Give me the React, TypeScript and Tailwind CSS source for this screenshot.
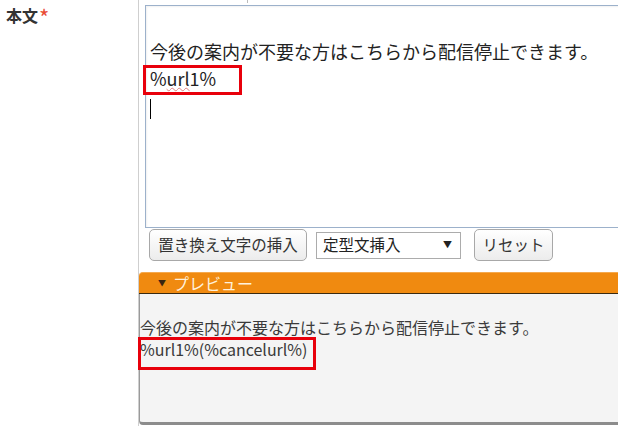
import React from 'react';

const JP = "font-['Meiryo','Noto_Sans_CJK_JP','Noto_Sans',sans-serif]";

const Btn: React.FC<{ label: string; w: string }> = ({ label, w }) => (
  <button
    className={`${w} h-[32px] rounded-[5px] border border-[#a8a8a8] bg-gradient-to-b from-white to-[#ececec] text-[15.5px] leading-none text-[#333] flex items-center justify-center`}
  >
    {label}
  </button>
);

const App: React.FC = () => {
  return (
    <div className={`relative w-[618px] h-[426px] overflow-hidden bg-white flex ${JP}`}>
      {/* label column */}
      <div className="w-[139px] shrink-0 border-r border-[#cfcfcf] pl-[6px] pt-[4px] flex items-start">
        <span className="text-[16px] font-bold text-[#333] leading-[22px]">本文</span>
        <span className="text-[22px] text-[#e94b35] leading-[22px] ml-[1px] mt-[1px]">*</span>
      </div>

      {/* field column */}
      <div className="relative flex-1 flex flex-col">
        <div className="absolute left-[108px] top-0 w-px h-[3px] bg-[#bbb]"></div>

        {/* textarea */}
        <div className="ml-[6px] mt-[5px] w-[500px] h-[223px] shrink-0 border border-[#9cb1cb] bg-white pl-[4px] pt-[5px] text-[18px] leading-[27px] text-[#222] shadow-[inset_1px_1px_2px_rgba(0,0,0,0.06)]">
          <div className="h-[27px]"></div>
          <div className="whitespace-nowrap">今後の案内が不要な方はこちらから配信停止できます。</div>
          <div>
            %<span className="underline decoration-wavy decoration-[#e08080] decoration-1 underline-offset-[1px]">url</span>1%
          </div>
          <div className="h-[27px] flex items-center">
            <span className="inline-block w-px h-[20px] bg-black mt-[6px]"></span>
          </div>
        </div>

        {/* buttons */}
        <div className="flex items-center ml-[10px] mt-px h-[32px]">
          <Btn label="置き換え文字の挿入" w="w-[158px]" />
          <div className="ml-[9px] w-[145px] h-[27px] border border-[#acacac] bg-white flex items-center justify-between pl-[6px] pr-[8px] text-[15.5px] text-[#222]">
            <span>定型文挿入</span>
            <span className="text-[9px] text-[#222]">▼</span>
          </div>
          <div className="ml-[13px]">
            <Btn label="リセット" w="w-[79px]" />
          </div>
        </div>

        {/* preview */}
        <div className="mt-[11px] flex flex-col">
          <div className="h-[22px] bg-[#f08a10] border-t border-[#f5a94e] border-b border-b-[#3a2a10] rounded-tl-[4px] flex items-center">
            <span className="ml-[19px] text-[8px] text-[#3a2410]">▼</span>
            <span className="ml-[7px] text-[16px] leading-none text-[#fff1dc]">プレビュー</span>
          </div>
          <div className="h-[131px] bg-[#f4f4f4] border-l border-[#9a9a9a] border-b-[3px] border-b-[#8c8c8c] rounded-bl-[4px] pt-[22px] text-[16px] leading-[22px] text-[#3a3a3a]">
            <div className="whitespace-nowrap">今後の案内が不要な方はこちらから配信停止できます。</div>
            <div>%url1%(%cancelurl%)</div>
          </div>
        </div>
      </div>

      {/* red annotation boxes */}
      <div className="absolute left-[143px] top-[65px] w-[99px] h-[30px] border-[3px] border-[#e8000b]"></div>
      <div className="absolute left-[138px] top-[337px] w-[178px] h-[33px] border-[3px] border-[#e8000b]"></div>
    </div>
  );
};

export default App;
